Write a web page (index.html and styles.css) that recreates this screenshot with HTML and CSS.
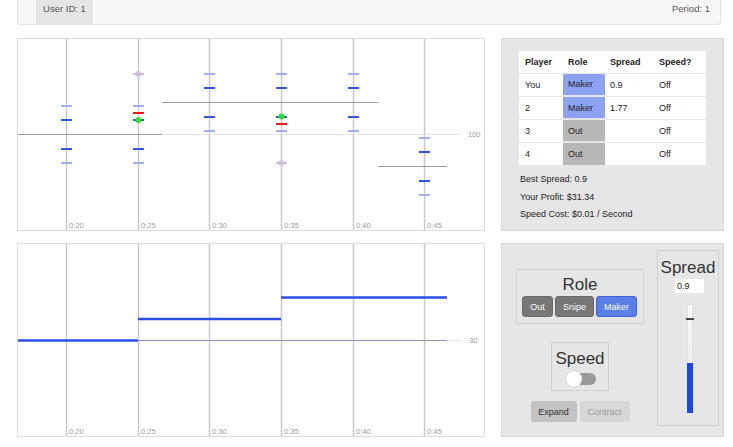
FILE: index.html
```html
<!DOCTYPE html>
<html>
<head>
<meta charset="utf-8">
<link rel="stylesheet" href="styles.css">
</head>
<body>
<div class="topbar">
  <div class="uid">User ID: 1</div>
  <div class="period">Period: 1</div>
</div>
<div class="main">
  <div class="chart">
    <svg width="466" height="191" viewBox="0 0 466 191">
      <g class="vlines">
        <line x1="48.5" y1="0" x2="48.5" y2="191"/>
        <line x1="120.5" y1="0" x2="120.5" y2="191"/>
        <line x1="191.5" y1="0" x2="191.5" y2="191"/>
        <line x1="263.5" y1="0" x2="263.5" y2="191"/>
        <line x1="335.5" y1="0" x2="335.5" y2="191"/>
        <line x1="406.5" y1="0" x2="406.5" y2="191"/>
      </g>
      <line class="base" x1="0" y1="95.5" x2="442" y2="95.5"/>
      <text class="axis" x="450" y="98">100</text>
      <g class="mid">
        <line x1="0" y1="95.5" x2="144" y2="95.5"/>
        <line x1="144" y1="63.5" x2="360" y2="63.5"/>
        <line x1="360" y1="127.5" x2="429" y2="127.5"/>
      </g>
      <g class="light">
        <rect x="43" y="66" width="11" height="2"/>
        <rect x="43" y="123" width="11" height="2"/>
        <rect x="115" y="66" width="11" height="2"/>
        <rect x="115" y="123" width="11" height="2"/>
        <rect x="186" y="34" width="11" height="2"/>
        <rect x="186" y="91" width="11" height="2"/>
        <rect x="258" y="34" width="11" height="2"/>
        <rect x="258" y="91" width="11" height="2"/>
        <rect x="330" y="34" width="11" height="2"/>
        <rect x="330" y="91" width="11" height="2"/>
        <rect x="401" y="98" width="11" height="2"/>
        <rect x="401" y="155" width="11" height="2"/>
      </g>
      <g class="blue">
        <rect x="43" y="80" width="11" height="2"/>
        <rect x="43" y="109" width="11" height="2"/>
        <rect x="115" y="80" width="11" height="2"/>
        <rect x="115" y="109" width="11" height="2"/>
        <rect x="186" y="48" width="11" height="2"/>
        <rect x="186" y="77" width="11" height="2"/>
        <rect x="258" y="48" width="11" height="2"/>
        <rect x="258" y="77" width="11" height="2"/>
        <rect x="330" y="48" width="11" height="2"/>
        <rect x="330" y="77" width="11" height="2"/>
        <rect x="401" y="112" width="11" height="2"/>
        <rect x="401" y="141" width="11" height="2"/>
      </g>
      <g class="red">
        <rect x="115" y="73" width="11" height="2"/>
        <rect x="258" y="84" width="11" height="2"/>
      </g>
      <g class="green">
        <circle cx="120.5" cy="81" r="3"/>
        <circle cx="263.5" cy="77.5" r="3"/>
      </g>
      <g class="purple">
        <ellipse cx="120.5" cy="35" rx="3" ry="3"/>
        <rect x="115" y="34" width="11" height="2"/>
        <ellipse cx="263.5" cy="124" rx="3" ry="3"/>
        <rect x="258" y="123" width="11" height="2"/>
      </g>
      <g class="axis">
        <text x="51" y="189">0:20</text>
        <text x="123" y="189">0:25</text>
        <text x="194" y="189">0:30</text>
        <text x="266" y="189">0:35</text>
        <text x="338" y="189">0:40</text>
        <text x="409" y="189">0:45</text>
      </g>
    </svg>
  </div>

  <div class="panel info">
    <table class="players">
      <thead>
        <tr><th class="c1">Player</th><th class="c2">Role</th><th class="c3">Spread</th><th class="c4">Speed?</th></tr>
      </thead>
      <tbody>
        <tr><td>You</td><td class="maker">Maker</td><td>0.9</td><td>Off</td></tr>
        <tr><td>2</td><td class="maker">Maker</td><td>1.77</td><td>Off</td></tr>
        <tr><td>3</td><td class="out">Out</td><td></td><td>Off</td></tr>
        <tr><td>4</td><td class="out">Out</td><td></td><td>Off</td></tr>
      </tbody>
    </table>
    <div class="stats">
      <p>Best Spread: 0.9</p>
      <p>Your Profit: $31.34</p>
      <p>Speed Cost: $0.01 / Second</p>
    </div>
  </div>

  <div class="chart">
    <svg width="466" height="192" viewBox="0 0 466 192">
      <g class="vlines">
        <line x1="48.5" y1="0" x2="48.5" y2="192"/>
        <line x1="120.5" y1="0" x2="120.5" y2="192"/>
        <line x1="191.5" y1="0" x2="191.5" y2="192"/>
        <line x1="263.5" y1="0" x2="263.5" y2="192"/>
        <line x1="335.5" y1="0" x2="335.5" y2="192"/>
        <line x1="406.5" y1="0" x2="406.5" y2="192"/>
      </g>
      <line class="base" x1="429" y1="96.5" x2="442" y2="96.5"/>
      <line class="thin" x1="0" y1="96.5" x2="429" y2="96.5"/>
      <text class="axis" x="451" y="99">30</text>
      <g class="thick">
        <line x1="0" y1="96.5" x2="120" y2="96.5"/>
        <line x1="120" y1="75" x2="263" y2="75"/>
        <line x1="263" y1="53.5" x2="429" y2="53.5"/>
      </g>
      <g class="axis">
        <text x="51" y="190">0:20</text>
        <text x="123" y="190">0:25</text>
        <text x="194" y="190">0:30</text>
        <text x="266" y="190">0:35</text>
        <text x="338" y="190">0:40</text>
        <text x="409" y="190">0:45</text>
      </g>
    </svg>
  </div>

  <div class="panel controls">
    <div class="leftcol">
      <div class="box rolebox">
        <div class="boxtitle">Role</div>
        <div class="btnrow">
          <button class="btn dark w-out">Out</button>
          <button class="btn dark w-snipe">Snipe</button>
          <button class="btn active w-maker">Maker</button>
        </div>
      </div>
      <div class="box speedbox">
        <div class="boxtitle">Speed</div>
        <div class="toggle"><span class="knob"></span></div>
      </div>
      <div class="btnrow2">
        <button class="btn2 expand">Expand</button>
        <button class="btn2 contract">Contract</button>
      </div>
    </div>
    <div class="box spreadbox">
      <div class="boxtitle">Spread</div>
      <div class="spreadinput">0.9</div>
      <div class="slider">
        <div class="fill"></div>
        <span class="thumb"></span>
      </div>
    </div>
  </div>
</div>
</body>
</html>
```

FILE: styles.css
```css
* { box-sizing: border-box; }
html, body { margin: 0; padding: 0; background: #fff; }
body {
  font-family: "Liberation Sans", Arial, sans-serif;
  color: #333;
  width: 733px;
  height: 447px;
  overflow: hidden;
}

.topbar {
  margin: 0 12px 0 17px;
  width: 704px;
  height: 25px;
  background: #f7f7f7;
  border: 1px solid #e2e2e2;
  border-top: none;
  border-radius: 0 0 3px 3px;
  display: flex;
  justify-content: space-between;
  font-size: 9.5px;
  color: #555;
}
.uid {
  margin-left: 18px;
  width: 57px;
  background: #e5e5e5;
  text-align: center;
  padding-top: 3px;
}
.period {
  padding-right: 10px;
  padding-top: 3px;
}

.main {
  margin: 13px 0 0 17px;
  display: grid;
  grid-template-columns: 468px 223px;
  grid-template-rows: 193px 194px;
  column-gap: 16px;
  row-gap: 12px;
}

.chart {
  border: 1px solid #dcdcdc;
  background: #fff;
}
.chart svg { display: block; }
.vlines line { stroke: #c9c9c9; stroke-width: 1.5; }
.base { stroke: #e2e2e2; stroke-width: 1; }
.mid line { stroke: #9a9a9a; stroke-width: 1; }
.light rect { fill: #9fb0ef; }
.blue rect { fill: #2f56e0; }
.red rect { fill: #f01818; }
.green circle { fill: #2be02b; }
.purple ellipse { fill: #d2c6df; }
.purple rect { fill: #c9bad9; }
.axis, text.axis { font-family: "Liberation Sans", Arial, sans-serif; font-size: 7.5px; fill: #9a9a9a; }
.thin { stroke: #8b93b5; stroke-width: 1; }
.thick line { stroke: #2a4fe6; stroke-width: 2.5; }

.panel {
  background: #e6e6e6;
  border: 1px solid #d6d6d6;
}
.info {
  padding: 12px 17px 0 17px;
}
.players {
  border-collapse: collapse;
  background: #fff;
  width: 187px;
  font-size: 9px;
  color: #222;
}
.players th {
  text-align: left;
  font-weight: bold;
  height: 22px;
  padding: 0 0 0 6px;
}
.players td {
  height: 23px;
  padding: 0 0 0 6px;
  border-top: 1px solid #e6e6e6;
}
.players .c1 { width: 44px; }
.players .c2 { width: 42px; padding-left: 5px; }
.players .c3 { width: 47px; padding-left: 5px; }
.players .c4 { width: 54px; padding-left: 7px; }
.players td:nth-child(2), .players td:nth-child(3) { padding-left: 5px; }
.players td:nth-child(4) { padding-left: 7px; }
.players td.maker { background: #8da2f2; }
.players td.out { background: #b7b7b7; }
.players tr:nth-child(n+2) td.maker, .players tr:nth-child(n+2) td.out { border-top: 2px solid #e6e6e6; }

.stats {
  margin-top: 6px;
  font-size: 9px;
  color: #222;
}
.stats p {
  margin: 0 0 0 1px;
  line-height: 17.5px;
}

.controls {
  display: flex;
  padding: 6px 4px 10px 0;
}
.leftcol {
  flex: 1;
  display: flex;
  flex-direction: column;
  align-items: center;
  padding-left: 1px;
}
.box {
  border: 1px solid #d0d0d0;
}
.boxtitle {
  font-size: 17px;
  line-height: 20px;
  text-align: center;
  color: #333;
}
.rolebox {
  margin-top: 19px;
  width: 128px;
  height: 55px;
  padding-top: 5px;
}
.btnrow {
  display: flex;
  justify-content: center;
  gap: 2px;
  margin-top: 1px;
  padding-right: 1px;
}
.btn {
  height: 21px;
  border: 1px solid #6a6a6a;
  border-radius: 3px;
  font-family: "Liberation Sans", Arial, sans-serif;
  font-size: 9px;
  color: #fff;
  padding: 0;
}
.btn.dark { background: #777; }
.btn.active { background: #5b7fe9; border-color: #3f63d2; }
.w-out { width: 31px; }
.w-snipe { width: 39px; }
.w-maker { width: 41px; }

.speedbox {
  margin-top: 18px;
  width: 58px;
  height: 49px;
  padding-top: 6px;
  display: flex;
  flex-direction: column;
  align-items: center;
}
.toggle {
  position: relative;
  width: 26px;
  height: 12px;
  margin: 4px 0 0 5px;
  background: #9a9a9a;
  border-radius: 6px;
}
.knob {
  position: absolute;
  left: -4px;
  top: -2px;
  width: 16px;
  height: 16px;
  border-radius: 50%;
  background: #fff;
  box-shadow: 0 0 1px rgba(0,0,0,0.3);
}

.btnrow2 {
  margin-top: 10px;
  display: flex;
  gap: 3px;
}
.btn2 {
  height: 21px;
  border: none;
  border-radius: 3px;
  font-family: "Liberation Sans", Arial, sans-serif;
  font-size: 9px;
  padding: 0;
}
.expand { width: 46px; background: #c2c2c2; color: #333; }
.contract { width: 50px; background: #d7d7d7; color: #999; }

.spreadbox {
  width: 62px;
  height: 176px;
  display: flex;
  flex-direction: column;
  align-items: center;
  padding-top: 7px;
}
.spreadinput {
  margin-top: 1px;
  width: 29px;
  height: 14px;
  background: #fff;
  font-size: 9px;
  line-height: 14px;
  padding-left: 2px;
  color: #222;
  margin-left: 3px;
}
.slider {
  position: relative;
  margin-top: 11px;
  margin-left: 4px;
  width: 6px;
  height: 109px;
  background: linear-gradient(#fbfbfb, #e3e3e3);
  border: 1px solid #e0e0e0;
  display: flex;
  flex-direction: column;
  justify-content: flex-end;
}
.fill {
  height: 50px;
  background: #1d47e3;
  margin: 0 -1px -1px -1px;
}
.thumb {
  position: absolute;
  left: -2px;
  top: 13px;
  width: 8px;
  height: 1.5px;
  background: #444;
}
```
